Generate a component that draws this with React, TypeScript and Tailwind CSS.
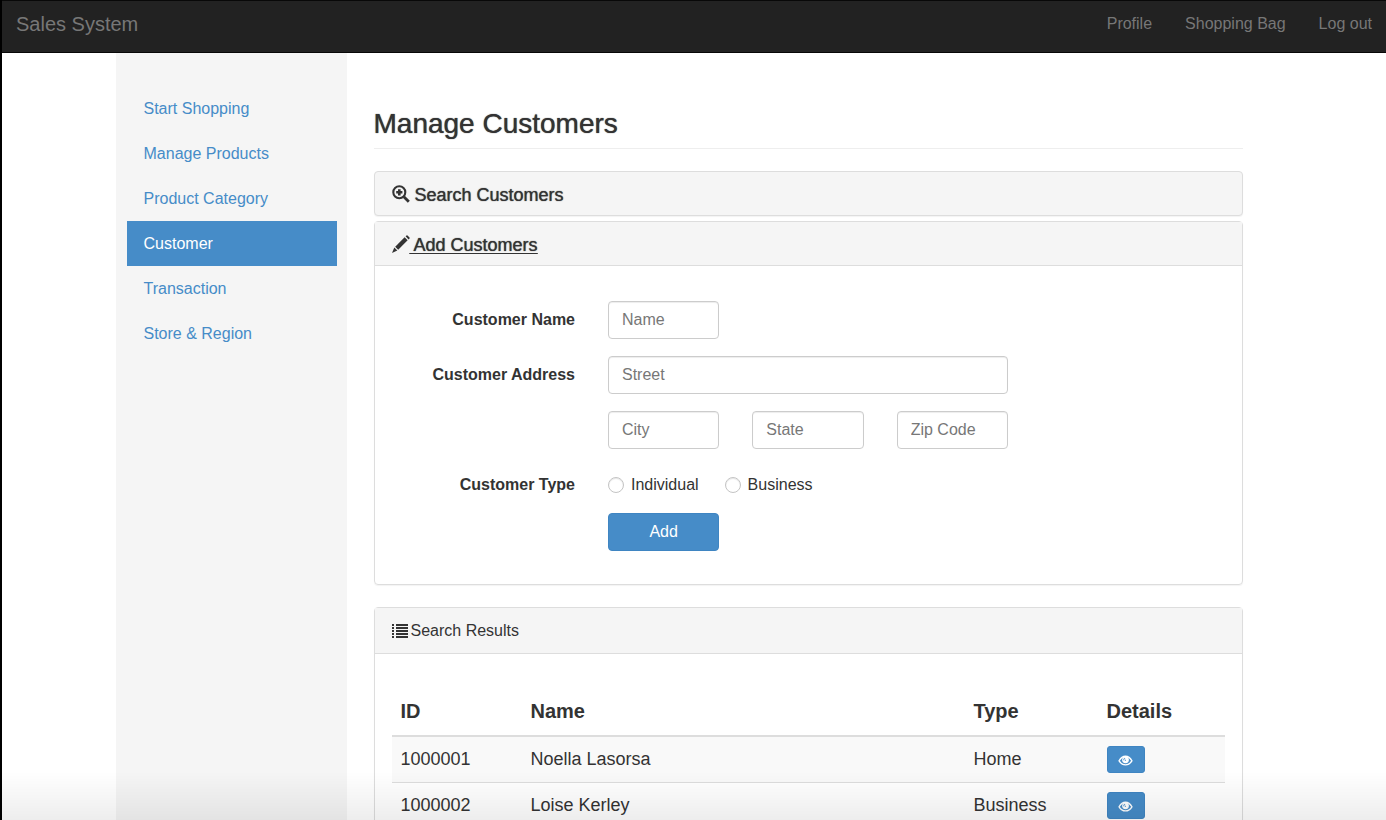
import React from "react";

const navLinks = ["Profile", "Shopping Bag", "Log out"];

const sideLinks = [
  "Start Shopping",
  "Manage Products",
  "Product Category",
  "Customer",
  "Transaction",
  "Store & Region",
];

const customers = [
  { id: "1000001", name: "Noella Lasorsa", type: "Home" },
  { id: "1000002", name: "Loise Kerley", type: "Business" },
];

const inputClass =
  "h-[38px] w-full min-w-0 rounded border border-[#ccc] bg-white px-[13px] text-base text-[#555] placeholder-[#777] shadow-[inset_0_1px_1px_rgba(0,0,0,0.075)] outline-none focus:border-[#66afe9]";

const radioClass =
  "size-4 appearance-none rounded-full border border-[#c4c4c4] bg-white shadow-[inset_0_1px_1px_rgba(0,0,0,0.1)] checked:border-[5px] checked:border-[#468cc8]";

function ZoomInIcon() {
  return (
    <svg viewBox="0 0 18 18" className="size-[18px] shrink-0" aria-hidden="true">
      <circle cx="7.3" cy="7.3" r="6" fill="none" stroke="currentColor" strokeWidth="2.1" />
      <path d="M7.3 4.2v6.2M4.2 7.3h6.2" stroke="currentColor" strokeWidth="2.6" />
      <path d="M11.8 11.8l5 5" stroke="currentColor" strokeWidth="2.8" />
    </svg>
  );
}

function PencilIcon() {
  return (
    <svg viewBox="0 0 18 18" className="size-[18px] shrink-0" aria-hidden="true" fill="currentColor">
      <path d="M13.6 1.300L14.500 .400Q15 0 15.500 .400L17.500 2.400Q18 3 17.500 3.500L16.600 4.400z" />
      <path d="M12.600 2.300L15.600 5.300L6.200 14.700L3.200 11.700z" />
      <path d="M2.300 12.600L5.300 15.600L0 18z" />
    </svg>
  );
}

function ListIcon() {
  return (
    <svg viewBox="0 0 16 16" className="size-4 shrink-0" aria-hidden="true" fill="currentColor">
      <path d="M0 1h2v2H0zM4 1h12v2H4zM0 4h2v2H0zM4 4h12v2H4zM0 7h2v2H0zM4 7h12v2H4zM0 10h2v2H0zM4 10h12v2H4zM0 13h2v2H0zM4 13h12v2H4z" />
    </svg>
  );
}

function EyeIcon() {
  return (
    <svg viewBox="0 0 16 12" className="h-[11px] w-[15px]" aria-hidden="true">
      <path d="M1 6.300C2.800 3 5.200 1.300 8 1.300s5.200 1.700 7 5c-1.800 3-4.200 4.500-7 4.500s-5.200-1.500-7-4.500z" fill="none" stroke="currentColor" strokeWidth="1.500" />
      <circle cx="8" cy="5.300" r="3.700" fill="currentColor" />
      <path d="M6 5.600c0-1.200.6-1.900 1.600-2.200M7.300 5.600h1.200" fill="none" stroke="#468cc8" strokeWidth="1.100" />
    </svg>
  );
}

export default function App() {
  return (
    <div className="flex h-screen flex-col overflow-hidden bg-white font-['Liberation_Sans',Arial,sans-serif] text-base leading-[22px] text-[#333]">
      <header className="flex h-[53px] shrink-0 items-center justify-between border-y border-[#080808] bg-[#222] pr-[14px] pb-[5px] pl-4 text-[#777]">
        <a href="#" className="text-xl leading-[22px]">Sales System</a>
        <nav className="flex gap-[33px]">
          {navLinks.map((label) => (
            <a key={label} href="#">{label}</a>
          ))}
        </nav>
      </header>

      <div className="grid min-h-0 flex-1 grid-cols-12">
        <aside className="col-span-2 col-start-2 bg-[#f5f5f5] pt-[33px] pr-[10px] pl-[11px]">
          <nav className="flex flex-col">
            {sideLinks.map((label) => (
              <a
                key={label}
                href="#"
                className={
                  label === "Customer"
                    ? "flex h-[45px] items-center bg-[#468cc8] px-[17px] text-white"
                    : "flex h-[45px] items-center px-[17px] text-[#468cc8]"
                }
              >
                {label}
              </a>
            ))}
          </nav>
        </aside>

        <main className="col-span-8 min-h-0 overflow-hidden pt-[55px] pr-7 pl-[27px]">
          <h1 className="border-b border-[#eee] pb-[9px] text-[28px] leading-[31px] text-shadow-[0_0_1px_currentColor]">Manage Customers</h1>

          <section className="mt-[22px] rounded border border-[#ddd] bg-[#f5f5f5] shadow-[0_1px_1px_rgba(0,0,0,0.05)]">
            <h2 className="px-[17px] text-lg leading-[22px] text-shadow-[0_0_1px_currentColor]">
              <a href="#" className="flex h-[43px] items-center gap-[5px]">
                <ZoomInIcon />
                <span className="pt-0.5">Search Customers</span>
              </a>
            </h2>
          </section>

          <section className="mt-[5px] rounded border border-[#ddd] shadow-[0_1px_1px_rgba(0,0,0,0.05)]">
            <h2 className="border-b border-[#ddd] bg-[#f5f5f5] px-[17px] text-lg leading-[22px] text-shadow-[0_0_1px_currentColor]">
              <a href="#" className="flex h-[43px] items-center">
                <PencilIcon />
                <span className="pt-0.5 whitespace-pre underline underline-offset-2"> Add Customers</span>
              </a>
            </h2>
            <form className="grid grid-cols-12 gap-x-[33px] gap-y-[17px] px-[17px] pt-[35px] pb-[33px]" onSubmit={(e) => e.preventDefault()}>
              <label htmlFor="name" className="col-span-3 self-center text-right font-bold">Customer Name</label>
              <div className="col-span-2">
                <input id="name" placeholder="Name" className={inputClass} />
              </div>

              <label htmlFor="street" className="col-span-3 col-start-1 self-center text-right font-bold">Customer Address</label>
              <div className="col-span-6">
                <input id="street" placeholder="Street" className={inputClass} />
              </div>

              <div className="col-span-2 col-start-4">
                <input aria-label="City" placeholder="City" className={inputClass} />
              </div>
              <div className="col-span-2">
                <input aria-label="State" placeholder="State" className={inputClass} />
              </div>
              <div className="col-span-2">
                <input aria-label="Zip Code" placeholder="Zip Code" className={inputClass} />
              </div>

              <span id="type-label" className="col-span-3 col-start-1 pt-2 text-right font-bold">Customer Type</span>
              <div role="radiogroup" aria-labelledby="type-label" className="col-span-6 flex gap-[26px] pt-2">
                <label className="flex items-center gap-[7px]">
                  <input type="radio" name="type" className={radioClass} />
                  Individual
                </label>
                <label className="flex items-center gap-[7px]">
                  <input type="radio" name="type" className={radioClass} />
                  Business
                </label>
              </div>

              <div className="col-span-2 col-start-4">
                <button type="submit" className="h-[38px] w-full rounded border border-[#3f85c2] bg-[#468cc8] text-white">Add</button>
              </div>
            </form>
          </section>

          <section className="mt-[22px] rounded border border-[#ddd] shadow-[0_1px_1px_rgba(0,0,0,0.05)]">
            <h2 className="flex h-[46px] items-center gap-[3px] border-b border-[#ddd] bg-[#f5f5f5] px-[17px]">
              <ListIcon />
              Search Results
            </h2>
            <div className="px-[17px] pt-[33px]">
              <table className="w-full table-fixed text-left text-lg leading-[22px]">
                <colgroup>
                  <col className="w-[130px]" />
                  <col />
                  <col className="w-[133px]" />
                  <col className="w-[127px]" />
                </colgroup>
                <thead>
                  <tr className="h-[49px] border-b-2 border-[#ddd] text-xl leading-[22px]">
                    <th className="px-[9px]">ID</th>
                    <th className="px-[9px]">Name</th>
                    <th className="px-[9px]">Type</th>
                    <th className="px-[9px]">Details</th>
                  </tr>
                </thead>
                <tbody>
                  {customers.map((c) => (
                    <tr key={c.id} className="h-[46px] border-b border-[#ddd] odd:bg-[#f9f9f9]">
                      <td className="px-[9px]">{c.id}</td>
                      <td className="px-[9px]">{c.name}</td>
                      <td className="px-[9px]">{c.type}</td>
                      <td className="px-[9px]">
                        <button type="button" aria-label={"Details of " + c.name} className="flex h-[27px] w-[38px] items-center justify-center rounded-[3px] border border-[#3f85c2] bg-[#468cc8] pt-0.5 text-white">
                          <EyeIcon />
                        </button>
                      </td>
                    </tr>
                  ))}
                </tbody>
              </table>
            </div>
          </section>
        </main>
      </div>

      <div className="pointer-events-none fixed inset-x-0 bottom-0 h-12 bg-linear-to-b from-transparent to-black/7" />
      <div className="pointer-events-none fixed inset-y-0 left-0 w-0.5 bg-black" />
    </div>
  );
}
